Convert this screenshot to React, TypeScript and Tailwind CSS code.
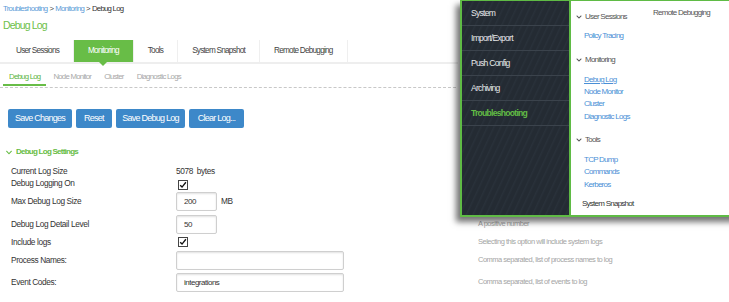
import React from "react";

const Chevron = ({ className = "" }: { className?: string }) => (
  <svg viewBox="0 0 448 512" className={className} fill="currentColor">
    <path d="M207.029 381.476L12.686 187.132c-9.373-9.373-9.373-24.569 0-33.941l22.667-22.667c9.357-9.357 24.522-9.375 33.901-.04L224 284.505l154.745-154.021c9.379-9.335 24.544-9.317 33.901.04l22.667 22.667c9.373 9.373 9.373 24.569 0 33.941L240.971 381.476c-9.373 9.372-24.569 9.372-33.942 0z" />
  </svg>
);

const Check = () => (
  <span className="flex h-[10px] w-[10px] items-center justify-center border border-[#444] bg-white">
    <svg viewBox="0 0 10 10" className="h-[8px] w-[8px]">
      <path d="M1.5 5.2 L3.8 7.6 L8.6 1.6" fill="none" stroke="#111" strokeWidth="1.7" />
    </svg>
  </span>
);

const Input = ({ w, value = "" }: { w: string; value?: string }) => (
  <input
    readOnly
    value={value}
    className={`${w} h-[19px] rounded-[2px] border border-[#cfcfcf] bg-white pl-[7px] text-[8px] tracking-[-0.5px] text-[#333] shadow-[inset_0_1px_2px_rgba(0,0,0,0.12)] outline-none`}
  />
);

export default function App() {
  const tabs = ["User Sessions", "Monitoring", "Tools", "System Snapshot", "Remote Debugging"];
  const subtabs = ["Debug Log", "Node Monitor", "Cluster", "Diagnostic Logs"];
  const menu = ["System", "Import/Export", "Push Config", "Archiving", "Troubleshooting"];

  return (
    <div className="relative h-[302px] w-[729px] overflow-hidden bg-white font-['Liberation_Sans',Arial,sans-serif] text-[8.4px] tracking-[-0.75px] text-[#333]">
      {/* Breadcrumb */}
      <div className="flex h-[17px] items-center pl-[3px] text-[7.8px]">
        <span className="text-[#5b9bd8]">Troubleshooting</span>
        <span className="mx-[2px] text-[#444]">&gt;</span>
        <span className="text-[#5b9bd8]">Monitoring</span>
        <span className="mx-[2px] text-[#444]">&gt;</span>
        <span className="text-[#333]">Debug Log</span>
      </div>
      {/* Title */}
      <div className="flex h-[18px] items-center pl-[3px] text-[10.5px] tracking-[-0.85px] text-[#6cc04a]">Debug Log</div>

      {/* Tabs */}
      <div className="mt-[5px] box-content flex h-[22px] w-[456px] border-b-2 border-[#eeeeee] pl-[2px]">
        {tabs.map((t) => (
          <div
            key={t}
            className={`relative flex h-[22px] items-center border-r border-[#efefef] px-[14px] text-[8.2px] ${
              t === "Monitoring" ? "bg-[#68bd47] text-white" : "text-[#444]"
            }`}
          >
            {t}
            {t === "Monitoring" && (
              <span className="absolute left-1/2 top-[22px] h-0 w-0 -translate-x-1/2 border-x-[4px] border-t-[4px] border-x-transparent border-t-[#68bd47]" />
            )}
          </div>
        ))}
      </div>

      {/* Sub tabs */}
      <div className="w-[456px] border-b border-dashed border-[#c8c8c8] pb-[1px] pl-[3px]">
        <div className="flex">
          {subtabs.map((t, i) => (
            <div
              key={t}
              className={`flex h-[22px] items-center px-[6px] pt-[5px] text-[7.8px] ${
                i === 0 ? "border-b-2 border-[#68bd47] text-[#5bb543]" : "border-b-2 border-transparent text-[#a8a8a8]"
              } ${i > 0 ? "ml-[1px]" : ""}`}
            >
              {t}
            </div>
          ))}
        </div>
      </div>

      {/* Buttons */}
      <div className="mt-[21px] flex gap-[4px] pl-[8px]">
        {[
          ["Save Changes", "w-[64px]"],
          ["Reset", "w-[36px]"],
          ["Save Debug Log", "w-[69px]"],
          ["Clear Log...", "w-[55px]"],
        ].map(([t, w]) => (
          <div
            key={t}
            className={`${w} flex h-[19px] items-center justify-center rounded-[2px] bg-[#3d88c9] text-[9px] text-white`}
          >
            {t}
          </div>
        ))}
      </div>

      {/* Section header */}
      <div className="mt-[18px] flex h-[12px] items-center pl-[6px] text-[8px] font-bold text-[#67bc45]">
        <Chevron className="mr-[4px] h-[7px] w-[6px]" />
        Debug Log Settings
      </div>

      {/* Form */}
      <div className="mt-[7px] grid grid-cols-[165px_302px_1fr] pl-[11px] text-[8.3px] tracking-[-0.38px] text-[#333]">
        <div className="flex h-[12px] items-center">Current Log Size</div>
        <div className="flex h-[12px] items-center">5078&nbsp;&nbsp;bytes</div>
        <div />

        <div className="flex h-[13px] items-center">Debug Logging On</div>
        <div className="flex h-[13px] items-end pl-[2px]"><Check /></div>
        <div />

        <div className="flex h-[23px] items-center">Max Debug Log Size</div>
        <div className="flex h-[23px] items-center">
          <Input w="w-[41px]" value="200" />
          <span className="ml-[4px]">MB</span>
        </div>
        <div />

        <div className="flex h-[22px] items-center">Debug Log Detail Level</div>
        <div className="flex h-[22px] items-center">
          <Input w="w-[41px]" value="50" />
        </div>
        <div className="flex h-[22px] items-center text-[7.5px] tracking-[-0.5px] text-[#a5a5a5]">A positive number</div>

        <div className="flex h-[14px] items-center">Include logs</div>
        <div className="flex h-[14px] items-center pl-[2px]"><Check /></div>
        <div className="flex h-[14px] items-center text-[7.5px] tracking-[-0.5px] text-[#a5a5a5]">Selecting this option will include system logs</div>

        <div className="flex h-[22px] items-center">Process Names:</div>
        <div className="flex h-[22px] items-center">
          <Input w="w-[168px]" />
        </div>
        <div className="flex h-[22px] items-center text-[7.5px] tracking-[-0.5px] text-[#a5a5a5]">Comma separated, list of process names to log</div>

        <div className="flex h-[22px] items-center">Event Codes:</div>
        <div className="flex h-[22px] items-center">
          <Input w="w-[168px]" value="integrations" />
        </div>
        <div className="flex h-[22px] items-center text-[7.5px] tracking-[-0.5px] text-[#a5a5a5]">Comma separated, list of events to log</div>
      </div>

      {/* Overlay menu */}
      <div className="absolute left-[460px] top-0 flex h-[217px] w-[280px] border-2 border-t border-[#5fbb45] bg-white shadow-[-4px_5px_6px_rgba(0,0,0,0.55)]">
        <div className="w-[107px] bg-[repeating-linear-gradient(115deg,#242b33_0px,#242b33_3px,#29313a_4px,#242b33_6px)]">
          {menu.map((m) => (
            <div
              key={m}
              className={`flex h-[25px] items-center border-b border-[#3b434c] pl-[9px] text-[8.6px] ${
                m === "Troubleshooting" ? "font-bold text-[#62bd45]" : "text-[#e6e8ea]"
              }`}
            >
              {m}
            </div>
          ))}
        </div>
        <div className="flex flex-1 border-l-2 border-[#5fbb45] text-[8px]">
          <div className="flex w-[82px] flex-col pl-[5px] pt-[10px]">
            <div className="flex h-[12px] items-center text-[#555]">
              <Chevron className="mr-[3px] h-[6px] w-[6px]" />User Sessions
            </div>
            <div className="mt-[7px] flex h-[12px] items-center pl-[8px] text-[#4a8fd6]">Policy Tracing</div>
            <div className="mt-[12px] flex h-[12px] items-center text-[#555]">
              <Chevron className="mr-[3px] h-[6px] w-[6px]" />Monitoring
            </div>
            <div className="mt-[8px] flex h-[12px] items-center pl-[8px] text-[#4a8fd6]">
              <span className="underline underline-offset-1">Debug Log</span>
            </div>
            <div className="flex h-[12px] items-center pl-[8px] text-[#4a8fd6]">Node Monitor</div>
            <div className="flex h-[12px] items-center pl-[8px] text-[#4a8fd6]">Cluster</div>
            <div className="mt-[1px] flex h-[12px] items-center pl-[8px] text-[#4a8fd6]">Diagnostic Logs</div>
            <div className="mt-[11px] flex h-[12px] items-center text-[#555]">
              <Chevron className="mr-[3px] h-[6px] w-[6px]" />Tools
            </div>
            <div className="mt-[8px] flex h-[12px] items-center pl-[8px] text-[#4a8fd6]">TCP Dump</div>
            <div className="flex h-[12px] items-center pl-[8px] text-[#4a8fd6]">Commands</div>
            <div className="mt-[1px] flex h-[12px] items-center pl-[8px] text-[#4a8fd6]">Kerberos</div>
            <div className="mt-[7px] flex h-[12px] items-center pl-[6px] text-[#333]">System Snapshot</div>
          </div>
          <div className="pt-[6px] text-[#555]">
            <div className="flex h-[12px] items-center">Remote Debugging</div>
          </div>
        </div>
      </div>
    </div>
  );
}
